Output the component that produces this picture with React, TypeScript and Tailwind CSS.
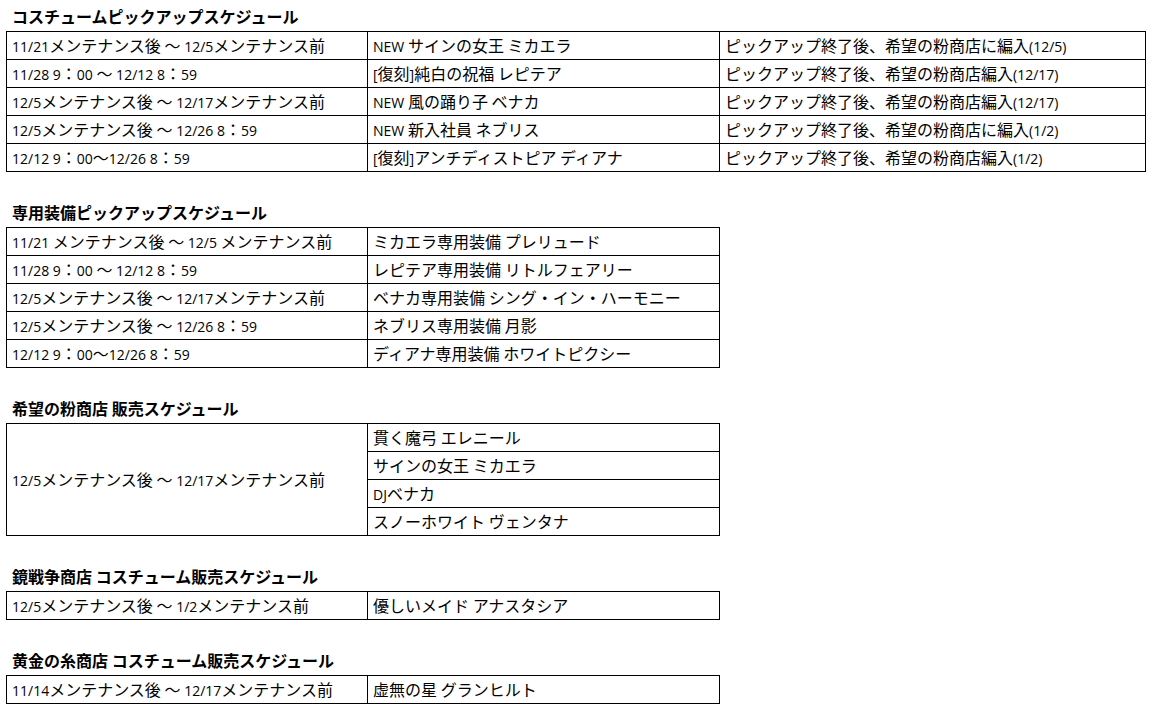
const FONT = "font-['Open_Sans','Noto_Sans_CJK_JP',sans-serif]";

type Row3 = [string, string, string];

const COSTUME: Row3[] = [
  ["11/21メンテナンス後 ～ 12/5メンテナンス前", "NEW サインの女王 ミカエラ", "ピックアップ終了後、希望の粉商店に編入(12/5)"],
  ["11/28 9：00 ～ 12/12 8：59", "[復刻]純白の祝福 レピテア", "ピックアップ終了後、希望の粉商店編入(12/17)"],
  ["12/5メンテナンス後 ～ 12/17メンテナンス前", "NEW 風の踊り子 ベナカ", "ピックアップ終了後、希望の粉商店編入(12/17)"],
  ["12/5メンテナンス後 ～ 12/26 8：59", "NEW 新入社員 ネブリス", "ピックアップ終了後、希望の粉商店に編入(1/2)"],
  ["12/12 9：00～12/26 8：59", "[復刻]アンチディストピア ディアナ", "ピックアップ終了後、希望の粉商店編入(1/2)"],
];

const GEAR: [string, string][] = [
  ["11/21 メンテナンス後 ～ 12/5 メンテナンス前", "ミカエラ専用装備 プレリュード"],
  ["11/28 9：00 ～ 12/12 8：59", "レピテア専用装備 リトルフェアリー"],
  ["12/5メンテナンス後 ～ 12/17メンテナンス前", "ベナカ専用装備 シング・イン・ハーモニー"],
  ["12/5メンテナンス後 ～ 12/26 8：59", "ネブリス専用装備 月影"],
  ["12/12 9：00～12/26 8：59", "ディアナ専用装備 ホワイトピクシー"],
];

const POWDER_SHOP = ["貫く魔弓 エレニール", "サインの女王 ミカエラ", "DJベナカ", "スノーホワイト ヴェンタナ"];

// latin runs are set a little smaller than the kana, like the sheet font does
function T({ text }: { text: string }) {
  const parts = text.split(/([\x20-\x7e]+)/);
  return (
    <span className="whitespace-pre">
      {parts.map((p, i) =>
        /^[\x20-\x7e]+$/.test(p) ? (
          <span key={i} className="text-[14px]">{p}</span>
        ) : (
          <span key={i}>{p}</span>
        )
      )}
    </span>
  );
}

function Title({ children }: { children: string }) {
  return (
    <div className="h-[28px] flex items-center pl-[6px] text-[16px] font-bold text-black">
      <T text={children} />
    </div>
  );
}

function Cell({ w, text }: { w: string; text: string }) {
  return (
    <div className={`${w} h-full shrink-0 border-r border-black px-[5px] flex items-center`}>
      <T text={text} />
    </div>
  );
}

function Table2({ rows }: { rows: [string, string][] }) {
  return (
    <div className="w-[714px] border-l border-t border-black">
      {rows.map((r, i) => (
        <div key={i} className="flex h-[28px] border-b border-black">
          <Cell w="w-[361px]" text={r[0]} />
          <Cell w="w-[352px]" text={r[1]} />
        </div>
      ))}
    </div>
  );
}

export default function App() {
  return (
    <div className={`min-h-screen bg-white pt-[3px] pl-[6px] text-[16px] leading-none text-black ${FONT}`}>
      <Title>コスチュームピックアップスケジュール</Title>
      <div className="w-[1140px] border-l border-t border-black">
        {COSTUME.map((r, i) => (
          <div key={i} className="flex h-[28px] border-b border-black">
            <Cell w="w-[361px]" text={r[0]} />
            <Cell w="w-[352px]" text={r[1]} />
            <Cell w="w-[426px]" text={r[2]} />
          </div>
        ))}
      </div>

      <div className="mt-[27px]">
        <Title>専用装備ピックアップスケジュール</Title>
        <Table2 rows={GEAR} />
      </div>

      <div className="mt-[27px]">
        <Title>希望の粉商店 販売スケジュール</Title>
        <div className="w-[714px] border-l border-t border-black flex">
          <div className="w-[361px] h-[112px] shrink-0 border-r border-b border-black px-[5px] flex items-center">
            <T text="12/5メンテナンス後 ～ 12/17メンテナンス前" />
          </div>
          <div className="flex flex-col">
            {POWDER_SHOP.map((name) => (
              <div key={name} className="flex h-[28px] border-b border-black">
                <Cell w="w-[352px]" text={name} />
              </div>
            ))}
          </div>
        </div>
      </div>

      <div className="mt-[27px]">
        <Title>鏡戦争商店 コスチューム販売スケジュール</Title>
        <Table2 rows={[["12/5メンテナンス後 ～ 1/2メンテナンス前", "優しいメイド アナスタシア"]]} />
      </div>

      <div className="mt-[27px]">
        <Title>黄金の糸商店 コスチューム販売スケジュール</Title>
        <Table2 rows={[["11/14メンテナンス後 ～ 12/17メンテナンス前", "虚無の星 グランヒルト"]]} />
      </div>
    </div>
  );
}
